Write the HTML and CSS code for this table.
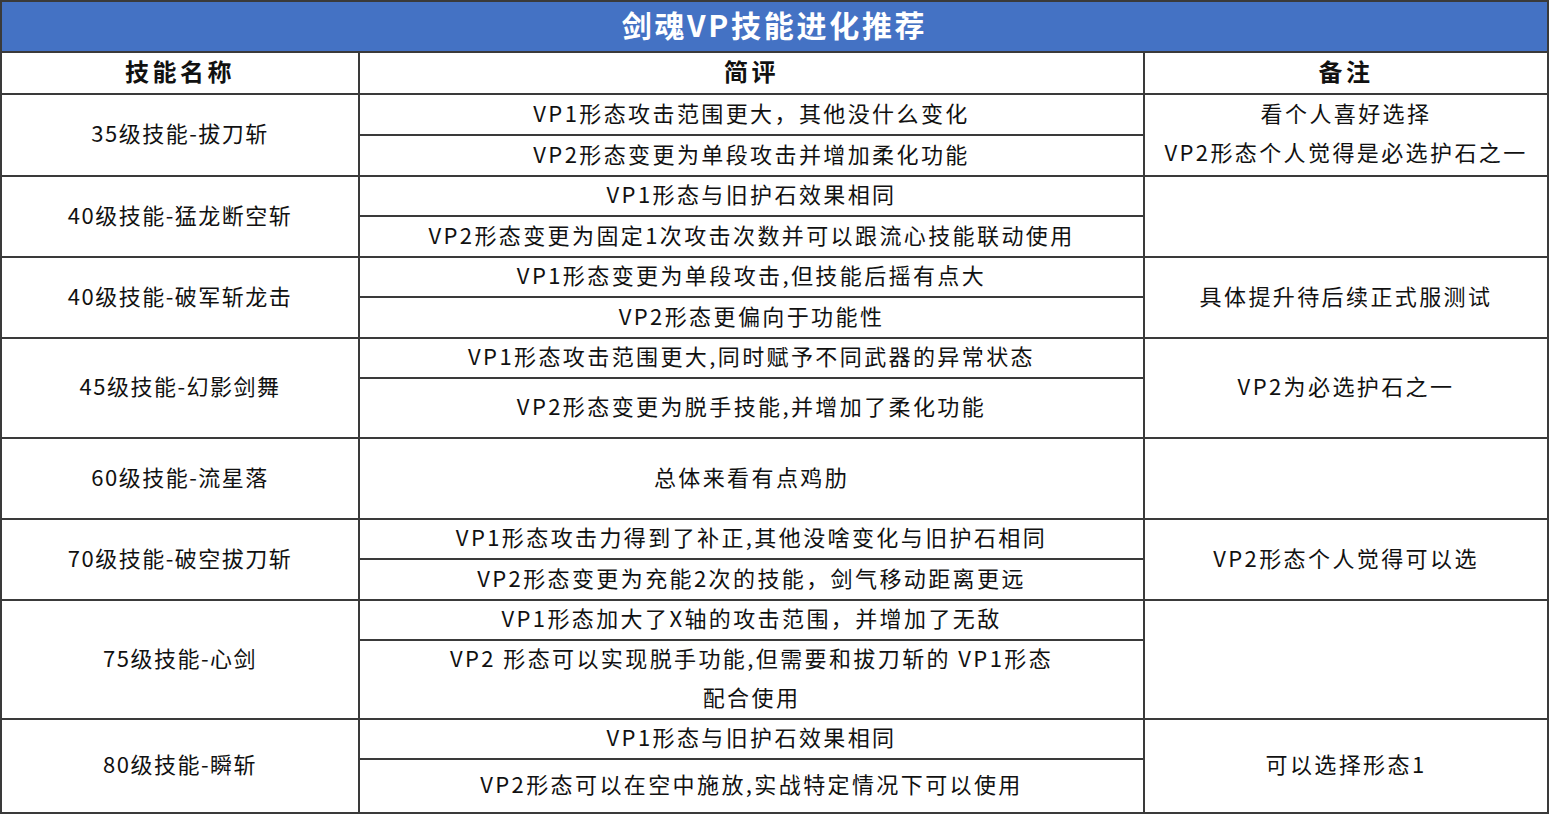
FILE: index.html
```html
<!DOCTYPE html>
<html lang="zh-CN">
<head>
<meta charset="utf-8">
<title>剑魂VP技能进化推荐</title>
<link rel="stylesheet" href="styles.css">
</head>
<body>
<div class="sheet">
  <div class="title">剑魂VP技能进化推荐</div>
  <div class="head">技能名称</div>
  <div class="head">简评</div>
  <div class="head">备注</div>

  <div class="name span2">35级技能-拔刀斩</div>
  <div class="cell">VP1形态攻击范围更大，其他没什么变化</div>
  <div class="note span2 multi">看个人喜好选择<br>VP2形态个人觉得是必选护石之一</div>
  <div class="cell">VP2形态变更为单段攻击并增加柔化功能</div>

  <div class="name span2">40级技能-猛龙断空斩</div>
  <div class="cell">VP1形态与旧护石效果相同</div>
  <div class="note span2"></div>
  <div class="cell">VP2形态变更为固定1次攻击次数并可以跟流心技能联动使用</div>

  <div class="name span2">40级技能-破军斩龙击</div>
  <div class="cell">VP1形态变更为单段攻击,但技能后摇有点大</div>
  <div class="note span2">具体提升待后续正式服测试</div>
  <div class="cell">VP2形态更偏向于功能性</div>

  <div class="name span2">45级技能-幻影剑舞</div>
  <div class="cell">VP1形态攻击范围更大,同时赋予不同武器的异常状态</div>
  <div class="note span2">VP2为必选护石之一</div>
  <div class="cell">VP2形态变更为脱手技能,并增加了柔化功能</div>

  <div class="name">60级技能-流星落</div>
  <div class="cell">总体来看有点鸡肋</div>
  <div class="note"></div>

  <div class="name span2">70级技能-破空拔刀斩</div>
  <div class="cell">VP1形态攻击力得到了补正,其他没啥变化与旧护石相同</div>
  <div class="note span2">VP2形态个人觉得可以选</div>
  <div class="cell">VP2形态变更为充能2次的技能，剑气移动距离更远</div>

  <div class="name span2">75级技能-心剑</div>
  <div class="cell">VP1形态加大了X轴的攻击范围，并增加了无敌</div>
  <div class="note span2"></div>
  <div class="cell multi">VP2 形态可以实现脱手功能,但需要和拔刀斩的 VP1形态<br>配合使用</div>

  <div class="name span2">80级技能-瞬斩</div>
  <div class="cell">VP1形态与旧护石效果相同</div>
  <div class="note span2">可以选择形态1</div>
  <div class="cell">VP2形态可以在空中施放,实战特定情况下可以使用</div>
</div>
</body>
</html>
```

FILE: styles.css
```css
html, body {
  margin: 0;
  padding: 0;
  background: #ffffff;
}

.sheet {
  width: 1549px;
  box-sizing: border-box;
  display: grid;
  grid-template-columns: 356px 783px 402px;
  grid-template-rows: 49px 40px 39px 39px 38px 39px 38px 39px 38px 58px 79px 38px 39px 38px 77px 38px 52px;
  gap: 2px;
  padding: 2px;
  background: #3a3a3a;
  font-family: "Noto Sans CJK SC", "Noto Sans", sans-serif;
  color: #111111;
}

.sheet > div {
  background: #ffffff;
  display: flex;
  align-items: center;
  justify-content: center;
  text-align: center;
  font-size: 22px;
  letter-spacing: 2.4px;
  line-height: 40px;
  padding-bottom: 6px;
}

.sheet > .title {
  grid-column: 1 / -1;
  background: #4472c4;
  color: #ffffff;
  font-weight: 700;
  font-size: 30px;
  letter-spacing: 2.7px;
  padding-bottom: 6px;
}

.sheet > .head {
  font-weight: 700;
  font-size: 24px;
  letter-spacing: 3.5px;
  padding-bottom: 4px;
}

.sheet > .span2 {
  grid-row: span 2;
}

.sheet > .name {
  letter-spacing: 1.5px;
}

.sheet > .multi {
  line-height: 39px;
}
```
